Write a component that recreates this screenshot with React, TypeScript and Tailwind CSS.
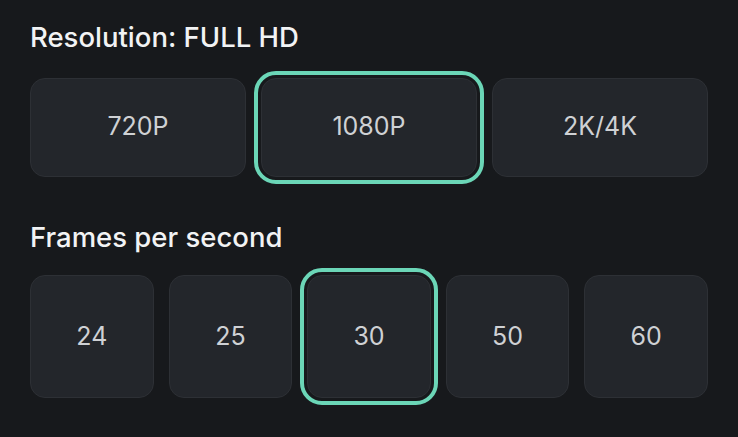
import React from "react";

const resolutions = ["720P", "1080P", "2K/4K"];
const fps = ["24", "25", "30", "50", "60"];

function Option({ label, selected, tall }: { label: string; selected: boolean; tall: boolean }) {
  return (
    <button
      className={
        "flex items-center justify-center rounded-[15px] border border-[#2d3035] bg-[#23262b] text-[25px] font-normal text-[#cfd1d4] " +
        (tall ? "h-[123px] " : "h-[99px] ") +
        (selected ? "outline-4 outline-offset-[3px] outline-[#6bd6b7]" : "")
      }
    >
      {label}
    </button>
  );
}

export default function App() {
  return (
    <div
      className="flex h-[437px] w-[738px] flex-col bg-[#17191c] px-[30px] pt-[24px]"
      style={{ fontFamily: "Inter, 'Noto Sans', sans-serif" }}
    >
      <h2 className="text-[27.5px] font-medium leading-none text-[#f2f3f4]">Resolution: FULL HD</h2>
      <div className="mt-[26px] grid grid-cols-3 gap-[15px]">
        {resolutions.map((r) => (
          <Option key={r} label={r} selected={r === "1080P"} tall={false} />
        ))}
      </div>
      <h2 className="mt-[47px] text-[27.5px] font-medium leading-none text-[#f2f3f4]">Frames per second</h2>
      <div className="mt-[24px] grid grid-cols-5 gap-[15px]">
        {fps.map((f) => (
          <Option key={f} label={f} selected={f === "30"} tall={true} />
        ))}
      </div>
    </div>
  );
}
